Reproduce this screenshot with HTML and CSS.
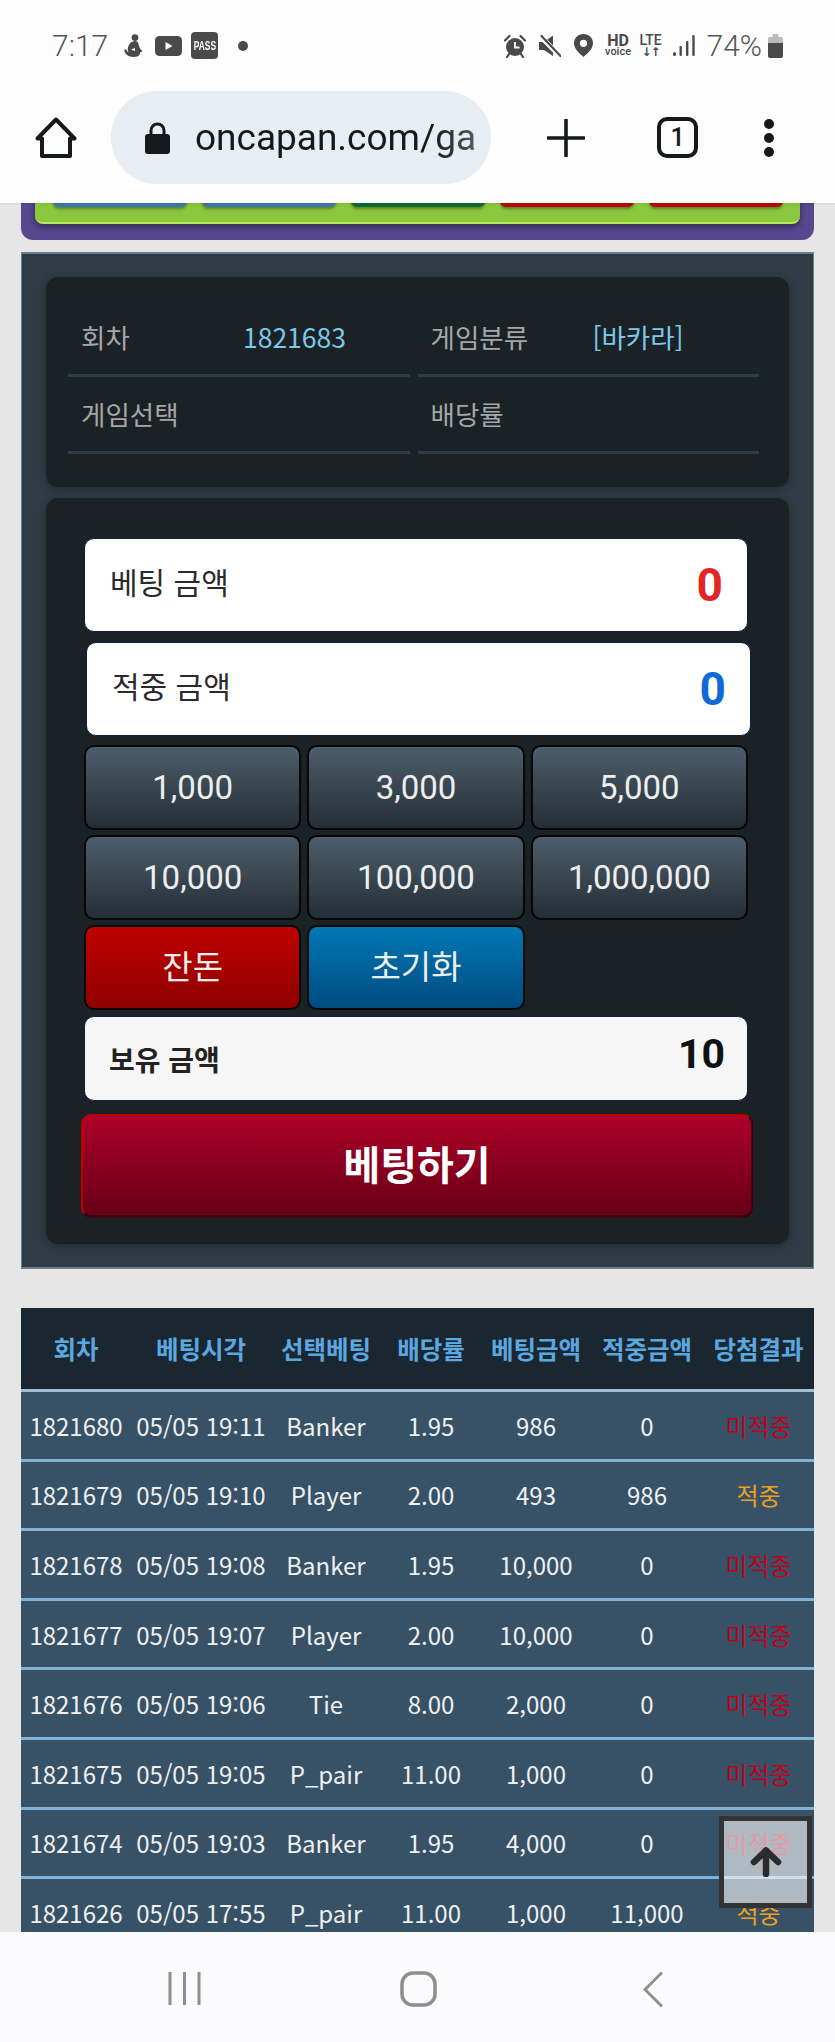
FILE: index.html
```html
<!DOCTYPE html>
<html lang="ko">

<head>
    <meta charset="UTF-8">
    <meta name="viewport" content="width=device-width, initial-scale=1.0">
    <title>oncapan</title>
    <link rel="stylesheet" href="styles.css">
</head>

<body>
    <header class="browser">
        <div class="statusbar">
            <div class="status-left">
                <span class="clock">7:17</span>
                <svg class="ic-figure" viewBox="0 0 20 24"><circle cx="11" cy="3.6" r="3.4" fill="#4a4a4a"/><path d="M8 8c3-2 6-1 6.500 2 .4 2.500 1.500 5 3.500 6.500 1 .8-.4 2-1.500 1.300l-1 3.200c-2 2.500-9 3-13-.5-1.500-1.500-2.500-3-2-4.500.5-1 2-.8 2.200.3.300 1 1 1.700 2 2.200-2-3.500-.5-8 2.800-10.500z" fill="#4a4a4a"/><path d="M7 15.500l4-1.500v3z" fill="#fdfdfd"/></svg>
                <svg class="ic-yt" viewBox="0 0 27 20"><rect width="27" height="20" rx="4.500" fill="#4a4a4a"/><path d="M10.500 6l7 4-7 4z" fill="#fdfdfd"/></svg>
                <span class="ic-pass"><span>PASS</span></span>
                <span class="ic-dot"></span>
            </div>
            <div class="status-right">
                <svg class="ic-alarm" viewBox="0 0 22 24"><path d="M1 6.500L5.500 2M21 6.500L16.500 2M5 20l-2 3M17 20l2 3" stroke="#4a4a4a" stroke-width="2.200" stroke-linecap="round"/><circle cx="11" cy="13" r="9" fill="#4a4a4a"/><path d="M11 8v5.500h4.500" fill="none" stroke="#fdfdfd" stroke-width="1.800"/></svg>
                <svg class="ic-mute" viewBox="0 0 22 22"><path d="M0 7h5L14 .5V21L5 15H0z" fill="#4a4a4a"/><path d="M1 1l19 19" stroke="#fdfdfd" stroke-width="5"/><path d="M2.500 1l19 20" stroke="#4a4a4a" stroke-width="2.200" stroke-linecap="round"/></svg>
                <svg class="ic-pin" viewBox="0 0 19 23"><path d="M9.500 0C4 0 0 4 0 9.300 0 15 5.500 19.500 9.500 23c4-3.500 9.500-8 9.500-13.700C19 4 15 0 9.500 0z" fill="#4a4a4a"/><circle cx="9.500" cy="9.300" r="3.600" fill="#fdfdfd"/></svg>
                <span class="ic-hd"><b>HD</b><i>voice</i></span>
                <span class="ic-lte"><b>LTE</b><i>↓↑</i></span>
                <svg class="ic-signal" viewBox="0 0 22 22"><rect x="0" y="17" width="3" height="4" rx="1.500" fill="#4a4a4a"/><rect x="6.500" y="11" width="2.400" height="10" rx="1" fill="#4a4a4a"/><rect x="13" y="6" width="2.400" height="15" rx="1" fill="#4a4a4a"/><rect x="19.300" y="0" width="2.400" height="21" rx="1" fill="#4a4a4a"/></svg>
                <span class="percent">74%</span>
                <svg class="ic-battery" viewBox="0 0 15 24"><path d="M4.500 1.500C4.500.7 5 0 6 0h3c1 0 1.500.7 1.500 1.500V3H13c1.200 0 2 .8 2 2v5H0V5c0-1.200.8-2 2-2h2.500z" fill="#bbb"/><path d="M0 9h15v13c0 1.200-.8 2-2 2H2c-1.200 0-2-.8-2-2z" fill="#4a4a4a"/></svg>
            </div>
        </div>
        <div class="toolbar">
            <svg class="ic-home" viewBox="0 0 42 42"><path d="M21 2.500L39.500 21.500H35V39H7V21.500H2.500Z" fill="none" stroke="#16191c" stroke-width="4" stroke-linejoin="round"/></svg>
            <div class="urlbar">
                <svg class="ic-lock" viewBox="0 0 25 32"><path d="M6 14V8.500a6.500 6.500 0 0 1 13 0V14" fill="none" stroke="#16191c" stroke-width="3"/><rect y="12" width="25" height="20" rx="3" fill="#16191c"/></svg>
                <span class="url">oncapan.com/ga</span>
            </div>
            <svg class="ic-plus" viewBox="0 0 38 38"><path d="M19 1v36M1 19h36" stroke="#16191c" stroke-width="3.600" stroke-linecap="round"/></svg>
            <span class="tabcount">1</span>
            <svg class="ic-more" viewBox="0 0 10 38"><circle cx="5" cy="5" r="5" fill="#16191c"/><circle cx="5" cy="19" r="5" fill="#16191c"/><circle cx="5" cy="33" r="5" fill="#16191c"/></svg>
        </div>
    </header>

    <main class="page">
        <section class="game-panel">
            <div class="game-tabs">
                <span class="tab tab-blue"></span>
                <span class="tab tab-blue"></span>
                <span class="tab tab-green"></span>
                <span class="tab tab-red"></span>
                <span class="tab tab-red"></span>
            </div>
        </section>

        <section class="bet-panel">
            <div class="card info-card">
                <div class="info-cell"><span class="info-label">회차</span><span class="info-value">1821683</span></div>
                <div class="info-cell"><span class="info-label">게임분류</span><span class="info-value">[바카라]</span></div>
                <div class="info-cell"><span class="info-label">게임선택</span></div>
                <div class="info-cell"><span class="info-label">배당률</span></div>
            </div>

            <div class="card form-card">
                <div class="amount-row">
                    <span class="amount-label">베팅 금액</span>
                    <span class="amount-value red">0</span>
                </div>
                <div class="amount-row amount-shift">
                    <span class="amount-label">적중 금액</span>
                    <span class="amount-value blue">0</span>
                </div>
                <div class="chip-grid">
                    <button class="chip">1,000</button>
                    <button class="chip">3,000</button>
                    <button class="chip">5,000</button>
                    <button class="chip">10,000</button>
                    <button class="chip">100,000</button>
                    <button class="chip">1,000,000</button>
                    <button class="chip chip-kr chip-red">잔돈</button>
                    <button class="chip chip-kr chip-blue">초기화</button>
                </div>
                <div class="balance-row">
                    <span class="balance-label">보유 금액</span>
                    <span class="balance-value">10</span>
                </div>
                <button class="bet-btn">베팅하기</button>
            </div>
        </section>

        <table class="history">
            <colgroup>
                <col class="col-round">
                <col class="col-time">
                <col class="col-pick">
                <col class="col-rate">
                <col class="col-bet">
                <col class="col-win">
                <col class="col-result">
            </colgroup>
            <thead>
                <tr>
                    <th>회차</th>
                    <th>베팅시각</th>
                    <th>선택베팅</th>
                    <th>배당률</th>
                    <th>베팅금액</th>
                    <th>적중금액</th>
                    <th>당첨결과</th>
                </tr>
            </thead>
            <tbody>
                <tr><td>1821680</td><td>05/05 19:11</td><td>Banker</td><td>1.95</td><td>986</td><td>0</td><td class="miss">미적중</td></tr>
                <tr><td>1821679</td><td>05/05 19:10</td><td>Player</td><td>2.00</td><td>493</td><td>986</td><td class="hit">적중</td></tr>
                <tr><td>1821678</td><td>05/05 19:08</td><td>Banker</td><td>1.95</td><td>10,000</td><td>0</td><td class="miss">미적중</td></tr>
                <tr><td>1821677</td><td>05/05 19:07</td><td>Player</td><td>2.00</td><td>10,000</td><td>0</td><td class="miss">미적중</td></tr>
                <tr><td>1821676</td><td>05/05 19:06</td><td>Tie</td><td>8.00</td><td>2,000</td><td>0</td><td class="miss">미적중</td></tr>
                <tr><td>1821675</td><td>05/05 19:05</td><td>P_pair</td><td>11.00</td><td>1,000</td><td>0</td><td class="miss">미적중</td></tr>
                <tr><td>1821674</td><td>05/05 19:03</td><td>Banker</td><td>1.95</td><td>4,000</td><td>0</td><td class="miss">미적중</td></tr>
                <tr><td>1821626</td><td>05/05 17:55</td><td>P_pair</td><td>11.00</td><td>1,000</td><td>11,000</td><td class="hit">적중</td></tr>
            </tbody>
        </table>
    </main>

    <button class="to-top">
        <svg viewBox="0 0 32 30"><path d="M16 4v23" stroke="#2b2b2b" stroke-width="6.500" stroke-linecap="round"/><path d="M4 15L16 3.500 28 15" fill="none" stroke="#2b2b2b" stroke-width="6.500" stroke-linecap="round" stroke-linejoin="round"/></svg>
    </button>

    <nav class="navbar">
        <svg class="nav-recent" viewBox="0 0 33 35"><path d="M2 1v33M16.500 1v33M31 1v33" stroke="#8e8e8e" stroke-width="3"/></svg>
        <svg class="nav-home" viewBox="0 0 37 36"><rect x="2" y="2" width="33" height="32" rx="11" fill="none" stroke="#8e8e8e" stroke-width="3.500"/></svg>
        <svg class="nav-back" viewBox="0 0 20 37"><path d="M19 1.500L2 18.500l17 17" fill="none" stroke="#8e8e8e" stroke-width="3"/></svg>
    </nav>
</body>

</html>
```

FILE: styles.css
```css
* {
    box-sizing: border-box;
}

html,
body {
    margin: 0;
    height: 2042px;
    overflow: hidden;
}

body {
    position: relative;
    display: flex;
    flex-direction: column;
    background-color: #e6e6e6;
    font-family: "Noto Sans CJK KR", "Noto Sans", sans-serif;
    color: #333;
}

svg {
    display: block;
    flex: none;
}

/* phone + browser chrome */
.browser {
    flex: none;
    height: 203px;
    background-color: #fdfdfd;
    box-shadow: 0 1px 2px rgba(0, 0, 0, 0.08);
    position: relative;
    z-index: 2;
}

.statusbar {
    height: 91px;
    padding: 0 52px;
    display: flex;
    justify-content: space-between;
    align-items: center;
    color: #555;
}

.status-left,
.status-right {
    display: flex;
    align-items: center;
}

.clock,
.percent {
    font-family: Roboto, sans-serif;
    font-size: 30px;
    font-weight: 300;
}

.ic-figure {
    width: 20px;
    height: 24px;
    margin-left: 16px;
}

.ic-yt {
    width: 27px;
    height: 20px;
    margin-left: 11px;
}

.ic-pass {
    width: 27px;
    height: 27px;
    margin-left: 9px;
    display: flex;
    align-items: center;
    justify-content: center;
    background-color: #4a4a4a;
    border-radius: 4px;
    color: #fdfdfd;
    font-family: "Liberation Sans", sans-serif;
    font-size: 12px;
    font-weight: 700;
}

.ic-pass span {
    transform: scaleX(0.7);
}

.ic-dot {
    width: 10px;
    height: 10px;
    margin-left: 20px;
    border-radius: 50%;
    background-color: #4a4a4a;
}

.ic-alarm {
    width: 22px;
    height: 24px;
}

.ic-mute {
    width: 22px;
    height: 22px;
    margin-left: 13px;
}

.ic-pin {
    width: 19px;
    height: 23px;
    margin-left: 13px;
}

.ic-hd,
.ic-lte {
    display: flex;
    flex-direction: column;
    align-items: center;
    font-family: Roboto, sans-serif;
    color: #4a4a4a;
}

.ic-hd {
    width: 25px;
    margin-left: 13px;
}

.ic-hd b {
    font-size: 16px;
    line-height: 13px;
    font-weight: 700;
}

.ic-hd i {
    font-size: 11px;
    line-height: 10px;
    font-style: normal;
    font-weight: 500;
}

.ic-lte {
    width: 24px;
    margin-left: 8px;
}

.ic-lte b {
    font-size: 14px;
    line-height: 13px;
    font-weight: 500;
}

.ic-lte i {
    font-family: "DejaVu Sans", sans-serif;
    font-size: 12px;
    line-height: 11px;
    font-style: normal;
    font-weight: 700;
    letter-spacing: -1px;
}

.ic-signal {
    width: 22px;
    height: 22px;
    margin-left: 10px;
}

.percent {
    margin-left: 12px;
}

.ic-battery {
    width: 15px;
    height: 24px;
    margin-left: 6px;
}

.toolbar {
    display: flex;
    align-items: center;
    height: 93px;
    padding-left: 35px;
}

.ic-home {
    width: 42px;
    height: 42px;
}

.urlbar {
    width: 380px;
    height: 93px;
    margin-left: 34px;
    padding-left: 34px;
    display: flex;
    align-items: center;
    gap: 25px;
    background-color: #e6edf3;
    border-radius: 46px;
}

.ic-lock {
    width: 25px;
    height: 32px;
}

.url {
    width: 280px;
    overflow: hidden;
    white-space: nowrap;
    font-family: Roboto, sans-serif;
    font-size: 37px;
    color: #16191c;
    -webkit-mask-image: linear-gradient(to right, #000 85%, rgba(0, 0, 0, 0.7) 100%);
    mask-image: linear-gradient(to right, #000 85%, rgba(0, 0, 0, 0.7) 100%);
}

.ic-plus {
    width: 38px;
    height: 38px;
    margin-left: 56px;
}

.tabcount {
    width: 41px;
    height: 41px;
    margin-left: 72px;
    border: 4px solid #16191c;
    border-radius: 10px;
    font-family: Roboto, sans-serif;
    font-size: 25px;
    font-weight: 500;
    line-height: 33px;
    text-align: center;
    color: #16191c;
}

.ic-more {
    width: 10px;
    height: 38px;
    margin-left: 66px;
}

/* page content, scrolled */
.page {
    flex: 1;
    min-height: 0;
    overflow: hidden;
    padding: 0 21px;
}

.game-panel {
    height: 80px;
    margin-top: -43px;
    padding: 0 14px;
    background-color: #56478f;
    border-radius: 0 0 12px 12px;
}

.game-tabs {
    height: 64px;
    padding: 0 17px 0 18px;
    display: flex;
    gap: 15px;
    background-color: #8ac73c;
    border-bottom: 2px solid #b5e85a;
    border-radius: 0 0 8px 8px;
    box-shadow: 0 3px 6px rgba(0, 0, 0, 0.4);
}

.tab {
    flex: 1;
    height: 47px;
    border-radius: 0 0 6px 6px;
    box-shadow: 0 2px 3px rgba(0, 0, 0, 0.35);
}

.tab-blue {
    background-color: #3f74b8;
}

.tab-green {
    background-color: #0b6a33;
}

.tab-red {
    background-color: #b80808;
}

.bet-panel {
    margin-top: 12px;
    padding: 23px 24px;
    background-color: #2f3c45;
    border: 2px solid #6a7f8c;
    border-width: 2px 1px;
    display: flex;
    flex-direction: column;
    gap: 11px;
}

.card {
    background-color: #1a2226;
    border-radius: 12px;
    box-shadow: 0 2px 8px rgba(0, 0, 0, 0.3);
}

.info-card {
    height: 210px;
    padding: 23px 30px 33px 22px;
    display: grid;
    grid-template-columns: 1fr 1fr;
    column-gap: 8px;
}

.info-cell {
    display: grid;
    grid-template-columns: 162px 1fr;
    align-items: center;
    padding: 0 0 1px 13px;
    border-bottom: 3px solid #2f3c45;
    font-size: 26.5px;
}

.info-label {
    color: #a6a6a6;
}

.info-value {
    color: #7ec8ea;
}

.form-card {
    padding: 40px 41px 26px 38px;
    display: flex;
    flex-direction: column;
}

.amount-row,
.balance-row {
    display: flex;
    justify-content: space-between;
    align-items: center;
    background-color: #fff;
    border: 1px solid #0b1e4a;
    border-radius: 10px;
    padding: 0 24px 0 25px;
}

.amount-row {
    height: 94px;
}

.amount-shift {
    margin: 10px -3px 0 2px;
}

.amount-label {
    font-size: 30px;
    color: #2a2a2a;
    margin-top: -8px;
}

.amount-value {
    font-family: Roboto, sans-serif;
    font-size: 46px;
    font-weight: 700;
}

.red {
    color: #e02626;
}

.blue {
    color: #0e6ad8;
}

.chip-grid {
    margin-top: 9px;
    display: grid;
    grid-template-columns: repeat(3, 1fr);
    grid-auto-rows: 85px;
    gap: 5px 6px;
}

.chip {
    padding: 0;
    border: 2px solid #050708;
    border-radius: 10px;
    background: linear-gradient(#4c5e6b, #242e36);
    color: #eee;
    font-family: Roboto, sans-serif;
    font-size: 33px;
}

.chip-kr {
    padding-bottom: 5px;
    font-family: "Noto Sans CJK KR", sans-serif;
    font-size: 33px;
}

.chip-red {
    background: linear-gradient(#c00000, #8e0000);
}

.chip-blue {
    background: linear-gradient(#0078b4, #004c80);
}

.balance-row {
    height: 85px;
    margin-top: 6px;
    background-color: #f6f6f6;
    padding: 0 22px 0 24px;
}

.balance-label {
    margin-top: 1px;
    font-size: 28px;
    font-weight: 700;
    color: #222;
}

.balance-value {
    margin-top: -9px;
    font-family: Roboto, sans-serif;
    font-size: 41px;
    font-weight: 700;
    color: #111;
}

.bet-btn {
    height: 104px;
    margin: 13px -5px 0 -3px;
    padding: 0 0 6px;
    border: none;
    border-top: 2px solid #c00000;
    border-left: 2px solid #c00000;
    border-right: 2px solid #3e0010;
    border-bottom: 3px solid #3e0010;
    border-radius: 10px;
    background: linear-gradient(#ae0028, #660014);
    color: #fff;
    font-family: "Noto Sans CJK KR", sans-serif;
    font-size: 40px;
    font-weight: 700;
}

.history {
    width: 100%;
    margin-top: 39px;
    table-layout: fixed;
    border-collapse: separate;
    border-spacing: 0;
    background-color: #375267;
    font-size: 24px;
    color: #f0f0f0;
}

.col-round {
    width: 110px;
}

.col-time {
    width: 140px;
}

.col-pick {
    width: 110px;
}

.col-rate {
    width: 100px;
}

.col-bet {
    width: 110px;
}

.col-win {
    width: 112px;
}

th,
td {
    padding: 0;
    text-align: center;
    white-space: nowrap;
    border-bottom: 3px solid #7fb2d4;
}

th {
    height: 84px;
    background-color: #1a2630;
    color: #5ba8e0;
    font-size: 24.5px;
    font-weight: 700;
    border-bottom-color: #a3bfd2;
}

td {
    height: 69.6px;
}

.miss {
    color: #c0001a;
}

.hit {
    color: #f0a020;
}

.to-top {
    position: absolute;
    right: 23px;
    bottom: 134px;
    width: 93px;
    height: 92px;
    padding: 0;
    display: flex;
    align-items: center;
    justify-content: center;
    border: 5px solid #333;
    background-color: rgba(255, 255, 255, 0.6);
    z-index: 3;
}

.to-top svg {
    width: 32px;
    height: 30px;
}

.navbar {
    flex: none;
    position: relative;
    z-index: 2;
    height: 110px;
    background-color: #fbfbfd;
    padding: 39px 0 0 168px;
    display: flex;
    align-items: flex-start;
}

.nav-recent {
    width: 33px;
    height: 35px;
}

.nav-home {
    width: 37px;
    height: 36px;
    margin: 0 206px 0 199px;
}

.nav-back {
    width: 20px;
    height: 37px;
}
```
